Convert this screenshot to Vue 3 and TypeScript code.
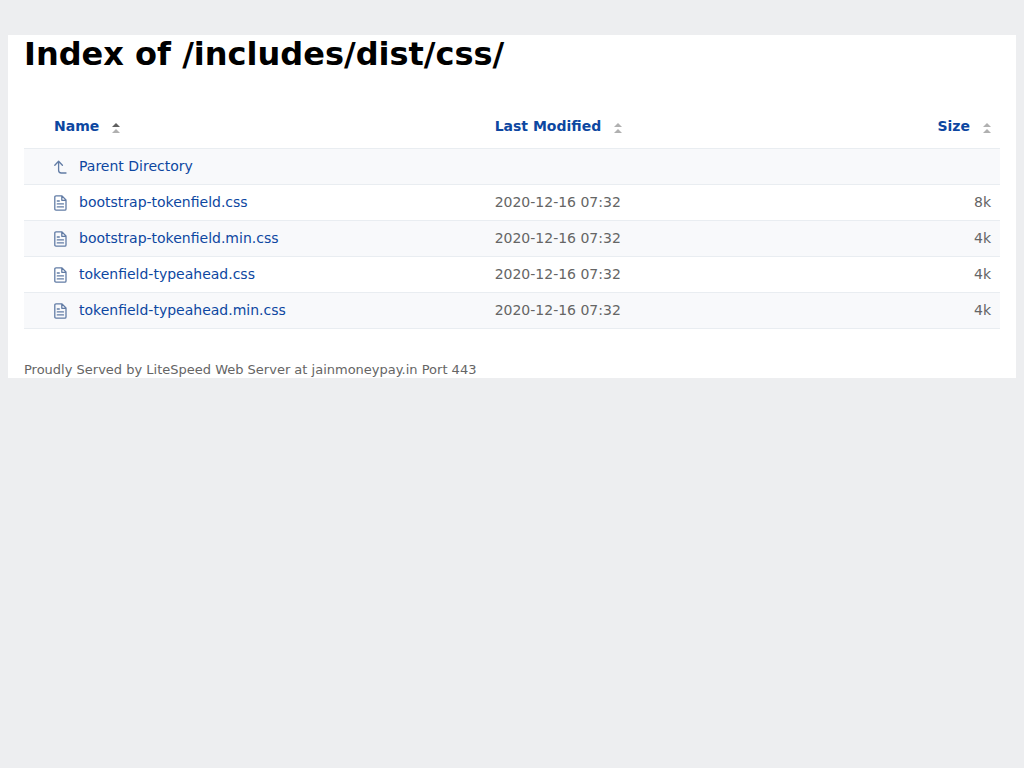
<script setup lang="ts">
import { computed, ref } from 'vue'

type Key = 'name' | 'modified' | 'size'
interface Entry { name: string; modified: string; size: number }

const path = '/includes/dist/css/'
const columns: { key: Key; label: string }[] = [
  { key: 'name', label: 'Name' },
  { key: 'modified', label: 'Last Modified' },
  { key: 'size', label: 'Size' },
]
const entries: Entry[] = [
  { name: 'bootstrap-tokenfield.css', modified: '2020-12-16 07:32', size: 8 },
  { name: 'bootstrap-tokenfield.min.css', modified: '2020-12-16 07:32', size: 4 },
  { name: 'tokenfield-typeahead.css', modified: '2020-12-16 07:32', size: 4 },
  { name: 'tokenfield-typeahead.min.css', modified: '2020-12-16 07:32', size: 4 },
]

const sortKey = ref<Key>('name')
const ascending = ref(true)

const sorted = computed(() => {
  const k = sortKey.value
  const dir = ascending.value ? 1 : -1
  return [...entries].sort((a, b) => (a[k] < b[k] ? -dir : a[k] > b[k] ? dir : 0))
})

function sortBy(key: Key) {
  ascending.value = sortKey.value === key ? !ascending.value : true
  sortKey.value = key
}

function ariaSort(key: Key) {
  if (sortKey.value !== key) return 'none'
  return ascending.value ? 'ascending' : 'descending'
}
</script>

<template>
  <main class="content">
    <h1>Index of {{ path }}</h1>
    <table>
      <thead>
        <tr>
          <th v-for="c in columns" :key="c.key" :class="c.key" scope="col" :aria-sort="ariaSort(c.key)">
            <button type="button" @click="sortBy(c.key)">
              {{ c.label }}
              <svg class="sort" viewBox="0 0 8 10" aria-hidden="true">
                <path :class="{ on: sortKey === c.key && ascending }" d="M0 4 4 0l4 4z" />
                <path :class="{ on: sortKey === c.key && !ascending }" d="M0 10 4 6l4 4z" />
              </svg>
            </button>
          </th>
        </tr>
      </thead>
      <tbody>
        <tr>
          <td class="name">
            <a href="../">
              <svg class="icon" viewBox="0 0 14 16" aria-hidden="true">
                <path d="M.8 6.3 4.6 2.2l3.8 4.1M4.6 2.5v8.8q0 2.7 2.7 2.7H12" />
              </svg>
              Parent Directory
            </a>
          </td>
          <td class="modified"></td>
          <td class="size"></td>
        </tr>
        <tr v-for="e in sorted" :key="e.name">
          <td class="name">
            <a :href="e.name">
              <svg class="icon" viewBox="0 0 14 16" aria-hidden="true">
                <path d="M2 .9H8L12 5v8.9q0 1.2-1.2 1.2H2q-1.2 0-1.2-1.2V2.1Q.8.9 2 .9zM7.8 1.2v4.1h4M3.3 6h2M3.3 8.9h6.2M3.3 11.9h6.2" />
              </svg>
              {{ e.name }}
            </a>
          </td>
          <td class="modified">{{ e.modified }}</td>
          <td class="size">{{ e.size }}k</td>
        </tr>
      </tbody>
    </table>
    <footer>Proudly Served by LiteSpeed Web Server at jainmoneypay.in Port 443</footer>
  </main>
</template>

<style>
body {
  margin: 0;
  background: #edeef0;
}
</style>

<style scoped>
.content {
  margin: 35px 8px 0;
  padding: 0 16px;
  background: #fff;
  color: #656565;
  font-family: "DejaVu Sans", Verdana, sans-serif;
  font-size: 14px;
}
h1 {
  margin: 0 0 32px;
  color: #000;
  font-size: 32px;
  line-height: 38px;
}
table {
  width: 100%;
  table-layout: fixed;
  border-collapse: separate;
  border-spacing: 0;
}
th,
td {
  box-sizing: border-box;
  height: 36px;
  padding: 0 9px 1px;
  border-bottom: 1px solid #e9edf1;
  line-height: 20px;
  text-align: left;
}
th {
  height: 44px;
  padding-bottom: 2px;
}
tbody tr:nth-child(odd) {
  background: #f8f9fb;
}
.name {
  width: 47.3%;
  padding-left: 30px;
}
.size {
  width: 12%;
  text-align: right;
}
button {
  display: inline-flex;
  align-items: center;
  gap: 13px;
  padding: 0;
  border: 0;
  background: none;
  color: #0d47a1;
  font: inherit;
  line-height: 20px;
  white-space: nowrap;
  cursor: pointer;
}
.sort {
  width: 8px;
  height: 10px;
  margin-top: 4px;
  fill: #b0b0b0;
}
.sort .on {
  fill: #606060;
}
a {
  display: flex;
  align-items: center;
  gap: 11px;
  color: #0d47a1;
  text-decoration: none;
}
.icon {
  width: 14px;
  height: 16px;
  margin-top: 2px;
  fill: none;
  stroke: #627ca5;
  stroke-width: 1.3;
  stroke-linecap: round;
  stroke-linejoin: round;
}
footer {
  padding-top: 32px;
  font-size: 13px;
  line-height: 17px;
}
</style>
